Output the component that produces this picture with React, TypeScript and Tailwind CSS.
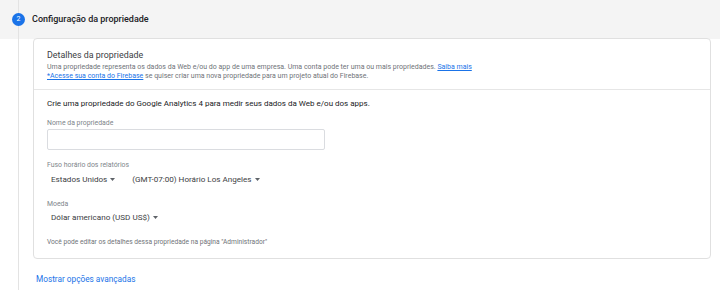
import { ReactNode } from "react";

function Caret() {
  return (
    <svg width="5" height="3" viewBox="0 0 5 3" className="ml-[3px] inline-block">
      <path d="M0 0h5L2.5 3z" fill="#5f6368" />
    </svg>
  );
}

function Label({ children }: { children: ReactNode }) {
  return <div className="text-[6.9px] leading-[10px] text-[#80868b]">{children}</div>;
}

function Select({ children }: { children: ReactNode }) {
  return (
    <button className="flex items-center text-[8.1px] leading-[12px] text-[#3c4043]">
      {children}
      <Caret />
    </button>
  );
}

export default function App() {
  return (
    <div
      className="relative h-[290px] w-[720px] overflow-hidden bg-white"
      style={{ fontFamily: "Roboto, 'Liberation Sans', sans-serif" }}
    >
      {/* timeline line */}
      <div className="absolute left-[18px] top-0 h-full w-px bg-[#e3e3e3]" />

      {/* step header */}
      <div className="flex h-[39px] items-center bg-[#f4f4f4] pl-[12px]">
        <div className="relative z-10 flex h-[13px] w-[13px] items-center justify-center rounded-full bg-[#1a73e8] text-[7px] text-white">
          2
        </div>
        <div className="ml-[7px] text-[9px] font-medium text-[#202124]">Configuração da propriedade</div>
      </div>

      <div className="pl-[33px] pr-[9px]">
        {/* card */}
        <div className="relative z-10 -mt-px rounded-[4px] border border-[#e0e0e0] bg-white">
          <div className="border-b border-[#e6e6e6] px-[13px] pb-[8px] pt-[10px]">
            <div className="text-[8.9px] leading-[13px] text-[#3c4043]">Detalhes da propriedade</div>
            <div className="mt-[1px] text-[7px] leading-[9px] text-[#6f7378]">
              Uma propriedade representa os dados da Web e/ou do app de uma empresa. Uma conta pode ter uma ou mais
              propriedades.{" "}
              <a className="text-[#1a73e8] underline">Saiba mais</a>
              <br />
              <a className="text-[#1a73e8] underline">*Acesse sua conta do Firebase</a> se quiser criar uma nova
              propriedade para um projeto atual do Firebase.
            </div>
          </div>

          <div className="px-[13px] pb-[11px] pt-[8px]">
            <div className="text-[8px] leading-[12px] text-[#202124]">
              Crie uma propriedade do Google Analytics 4 para medir seus dados da Web e/ou dos apps.
            </div>

            <div className="mt-[8px]">
              <Label>Nome da propriedade</Label>
              <div className="mt-px h-[21px] w-[278px] rounded-[2px] border border-[#dadce0]" />
            </div>

            <div className="mt-[10px]">
              <Label>Fuso horário dos relatórios</Label>
              <div className="mt-[3px] flex gap-[17px] pl-[4px]">
                <Select>Estados Unidos</Select>
                <Select>(GMT-07:00) Horário Los Angeles</Select>
              </div>
            </div>

            <div className="mt-[14px]">
              <Label>Moeda</Label>
              <div className="mt-[2px] pl-[4px]">
                <Select>Dólar americano (USD US$)</Select>
              </div>
            </div>

            <div className="mt-[14px] text-[6.65px] leading-[10px] text-[#6f7378]">
              Você pode editar os detalhes dessa propriedade na página "Administrador"
            </div>
          </div>
        </div>

        <div className="mt-[14px] pl-[3px] text-[8.25px] leading-[12px] text-[#1a73e8]">Mostrar opções avançadas</div>
      </div>
    </div>
  );
}
